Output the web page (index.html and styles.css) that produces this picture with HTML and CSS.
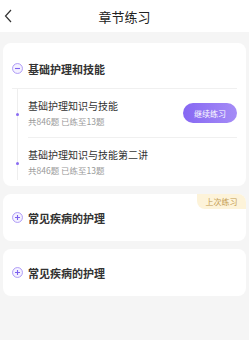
FILE: index.html
```html
<!DOCTYPE html>
<html lang="zh">
<head>
    <meta charset="UTF-8">
    <meta name="viewport" content="width=device-width, initial-scale=1.0">
    <title>章节练习</title>
    <link rel="stylesheet" href="styles.css">
</head>
<body>
    <div class="header">
        <svg class="back" width="8" height="14" viewBox="0 0 8 14">
            <path d="M7 1 L1.5 7 L7 13" fill="none" stroke="#333" stroke-width="1.2"/>
        </svg>
        <div class="title">章节练习</div>
    </div>

    <div class="content">
        <div class="card">
            <div class="chapter">
                <svg class="toggle" width="11" height="11" viewBox="0 0 12 12">
                    <circle cx="6" cy="6" r="5.4" fill="#f5f2ff" stroke="#a793f5" stroke-width="1"/>
                    <path d="M3.3 6 H8.7" stroke="#7d62ee" stroke-width="1.2"/>
                </svg>
                <span>基础护理和技能</span>
            </div>
            <div class="sections">
                <div class="section">
                    <div class="section-body">
                        <div class="section-info">
                            <div class="section-name">基础护理知识与技能</div>
                            <div class="section-stat">共846题 已练至13题</div>
                        </div>
                        <button class="continue">继续练习</button>
                    </div>
                </div>
                <div class="section">
                    <div class="section-body">
                        <div class="section-info">
                            <div class="section-name">基础护理知识与技能第二讲</div>
                            <div class="section-stat">共846题 已练至13题</div>
                        </div>
                    </div>
                </div>
            </div>
        </div>

        <div class="card">
            <div class="badge">上次练习</div>
            <div class="chapter closed">
                <svg class="toggle" width="11" height="11" viewBox="0 0 12 12">
                    <circle cx="6" cy="6" r="5.4" fill="#f5f2ff" stroke="#a793f5" stroke-width="1"/>
                    <path d="M3.3 6 H8.7 M6 3.3 V8.7" stroke="#7d62ee" stroke-width="1.2"/>
                </svg>
                <span>常见疾病的护理</span>
            </div>
        </div>

        <div class="card">
            <div class="chapter closed">
                <svg class="toggle" width="11" height="11" viewBox="0 0 12 12">
                    <circle cx="6" cy="6" r="5.4" fill="#f5f2ff" stroke="#a793f5" stroke-width="1"/>
                    <path d="M3.3 6 H8.7 M6 3.3 V8.7" stroke="#7d62ee" stroke-width="1.2"/>
                </svg>
                <span>常见疾病的护理</span>
            </div>
        </div>
    </div>
</body>
</html>
```

FILE: styles.css
```css
body {
    margin: 0;
    background-color: #f5f5f5;
    font-family: "Noto Sans CJK SC", "Noto Sans", sans-serif;
    color: #333;
}
.header {
    height: 32px;
    background-color: #fff;
    display: flex;
    align-items: center;
    justify-content: center;
    position: relative;
}
.back {
    position: absolute;
    left: 4px;
    top: 9px;
}
.title {
    font-size: 13px;
    color: #222;
}
.content {
    padding: 11px 3px;
    display: flex;
    flex-direction: column;
    gap: 8px;
}
.card {
    background-color: #fff;
    border-radius: 8px;
    padding: 0 9px;
    position: relative;
}
.chapter {
    display: flex;
    align-items: center;
    gap: 5px;
    height: 46px;
    padding-top: 6px;
    box-sizing: border-box;
    font-size: 11px;
    font-weight: bold;
    color: #333;
    border-bottom: 1px solid #f0f0f0;
}
.chapter.closed {
    border-bottom: none;
    height: 47px;
    padding-top: 0;
}
.sections {
    position: relative;
}
.sections::before {
    content: "";
    position: absolute;
    left: 5px;
    top: 0;
    bottom: 6px;
    width: 1px;
    background-color: #eeeeee;
}
.section {
    position: relative;
    padding-left: 16px;
}
.section::before {
    content: "";
    position: absolute;
    left: 4px;
    top: 23.5px;
    width: 3px;
    height: 3px;
    border-radius: 50%;
    background-color: #8a6cf2;
}
.section-body {
    display: flex;
    align-items: center;
    justify-content: space-between;
    padding: 10px 0;
}
.section:first-child .section-body {
    border-bottom: 1px solid #f0f0f0;
}
.section-name {
    font-size: 10px;
    line-height: 13px;
    color: #333;
}
.section-stat {
    margin-top: 4px;
    font-size: 8.5px;
    line-height: 11px;
    color: #999;
}
.continue {
    width: 54px;
    height: 20px;
    border: none;
    border-radius: 10px;
    background: linear-gradient(90deg, #8667f3, #a58cf6);
    color: #fff;
    font-family: inherit;
    font-size: 8px;
    padding: 0;
}
.badge {
    position: absolute;
    top: 0;
    right: 0;
    width: 49px;
    height: 15px;
    line-height: 15px;
    text-align: center;
    font-size: 8px;
    color: #c39a4f;
    background-color: #fdf3d9;
    border-radius: 0 8px 0 8px;
}
```
